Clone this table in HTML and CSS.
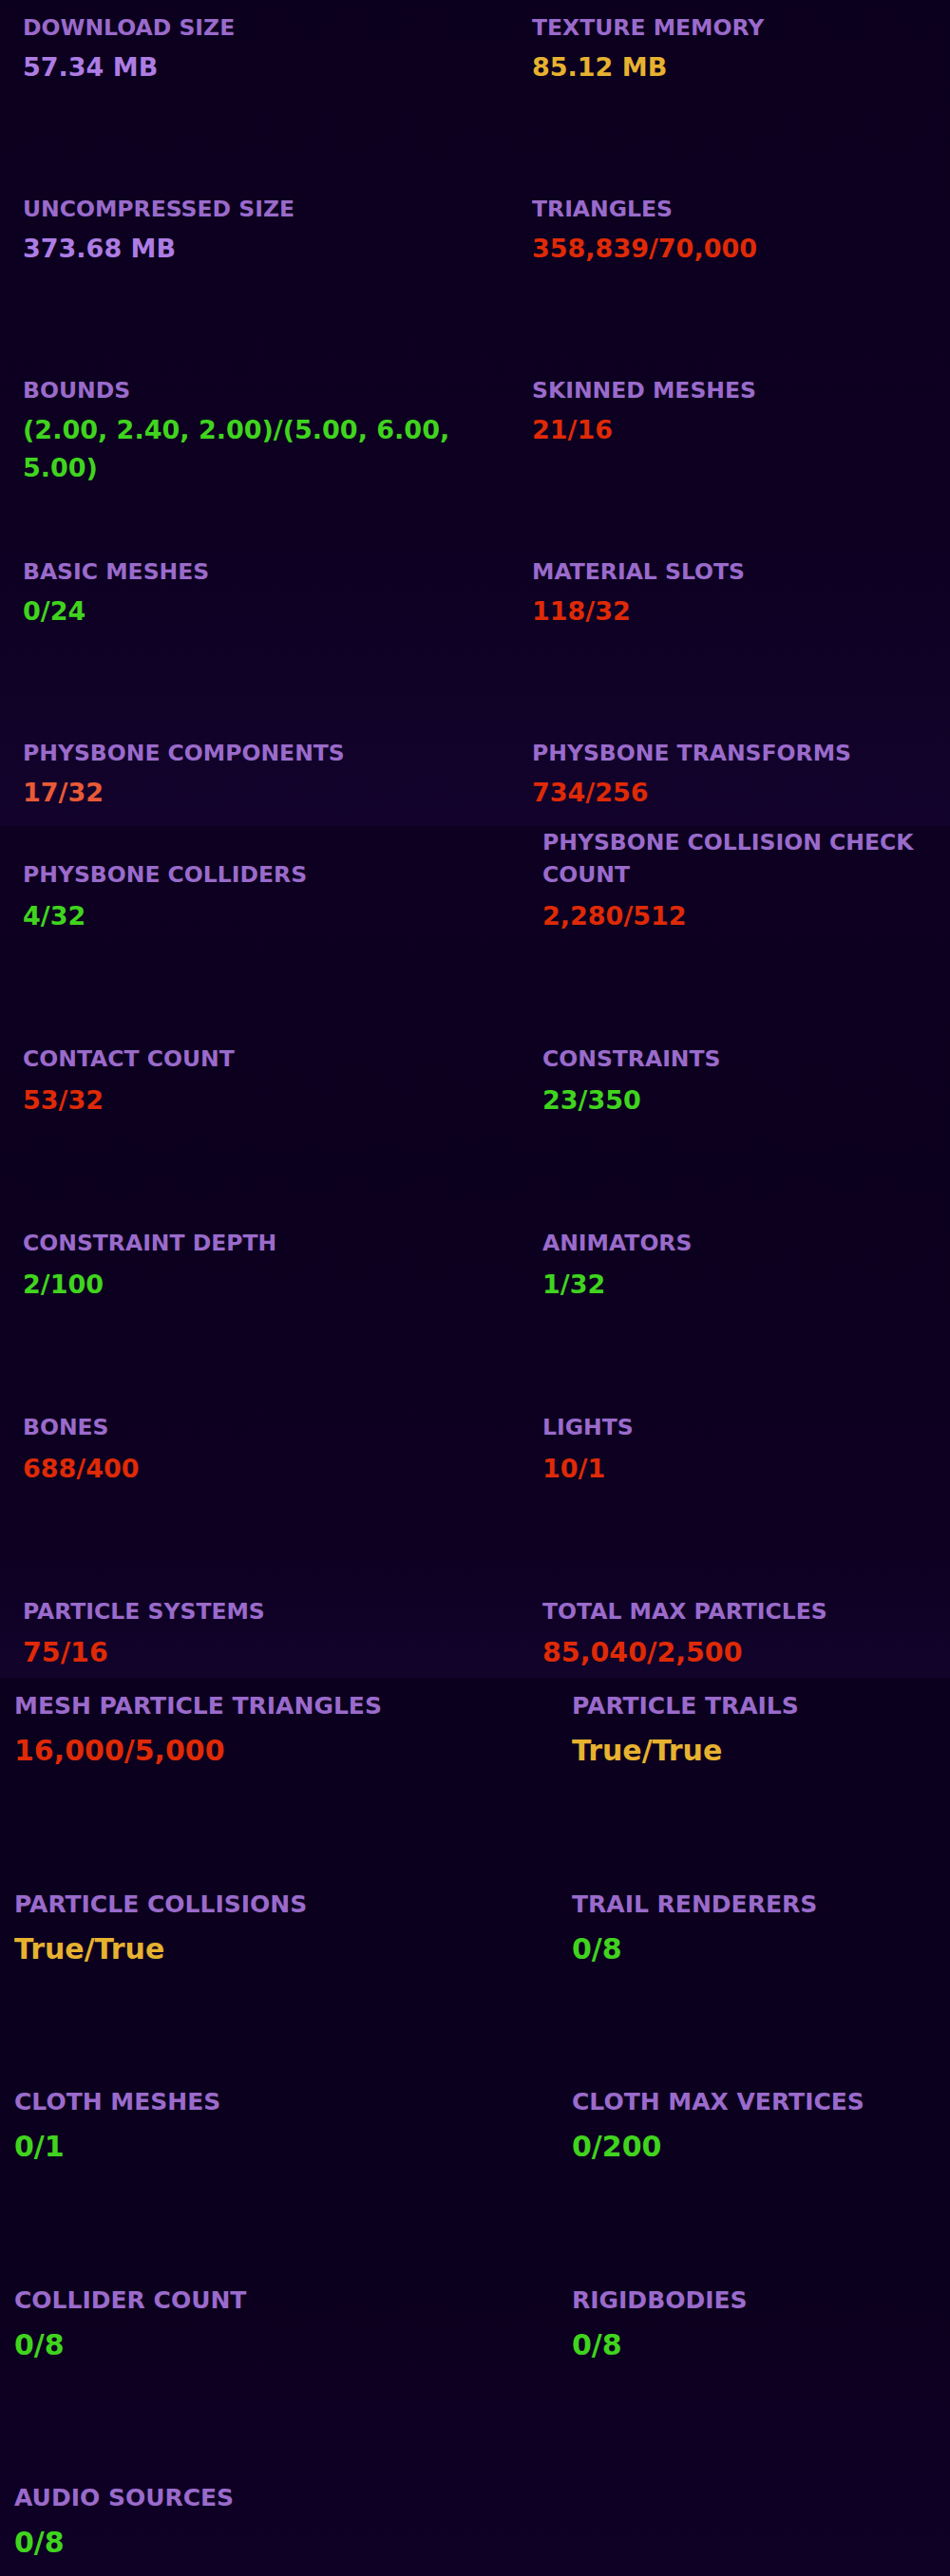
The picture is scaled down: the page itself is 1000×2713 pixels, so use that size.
FILE: index.html
```html
<!DOCTYPE HTML><html>
<head>
  <meta name="viewport" content="width=device-width, initial-scale=1">
  <title>Avatar Performance Stats</title>
  <link rel="stylesheet" href="styles.css">
</head>
<body>
  <main class="stats">

    <section class="panel panel-top">
      <div class="stat">
        <div class="label">DOWNLOAD SIZE</div>
        <div class="value lavender">57.34 MB</div>
      </div>
      <div class="stat">
        <div class="label">TEXTURE MEMORY</div>
        <div class="value yellow">85.12 MB</div>
      </div>
      <div class="stat">
        <div class="label">UNCOMPRESSED SIZE</div>
        <div class="value lavender">373.68 MB</div>
      </div>
      <div class="stat">
        <div class="label">TRIANGLES</div>
        <div class="value red">358,839/70,000</div>
      </div>
      <div class="stat">
        <div class="label">BOUNDS</div>
        <div class="value green">(2.00, 2.40, 2.00)/(5.00, 6.00, 5.00)</div>
      </div>
      <div class="stat">
        <div class="label">SKINNED MESHES</div>
        <div class="value red">21/16</div>
      </div>
      <div class="stat">
        <div class="label">BASIC MESHES</div>
        <div class="value green">0/24</div>
      </div>
      <div class="stat">
        <div class="label">MATERIAL SLOTS</div>
        <div class="value red">118/32</div>
      </div>
      <div class="stat">
        <div class="label">PHYSBONE COMPONENTS</div>
        <div class="value orange">17/32</div>
      </div>
      <div class="stat">
        <div class="label">PHYSBONE TRANSFORMS</div>
        <div class="value red">734/256</div>
      </div>
    </section>

    <section class="panel panel-mid">
      <div class="stat">
        <div class="label">PHYSBONE COLLIDERS</div>
        <div class="value green">4/32</div>
      </div>
      <div class="stat">
        <div class="label">PHYSBONE COLLISION CHECK COUNT</div>
        <div class="value red">2,280/512</div>
      </div>
      <div class="stat">
        <div class="label">CONTACT COUNT</div>
        <div class="value red">53/32</div>
      </div>
      <div class="stat">
        <div class="label">CONSTRAINTS</div>
        <div class="value green">23/350</div>
      </div>
      <div class="stat">
        <div class="label">CONSTRAINT DEPTH</div>
        <div class="value green">2/100</div>
      </div>
      <div class="stat">
        <div class="label">ANIMATORS</div>
        <div class="value green">1/32</div>
      </div>
      <div class="stat">
        <div class="label">BONES</div>
        <div class="value red">688/400</div>
      </div>
      <div class="stat">
        <div class="label">LIGHTS</div>
        <div class="value red">10/1</div>
      </div>
      <div class="stat">
        <div class="label">PARTICLE SYSTEMS</div>
        <div class="value red wide">75/16</div>
      </div>
      <div class="stat">
        <div class="label">TOTAL MAX PARTICLES</div>
        <div class="value red wide">85,040/2,500</div>
      </div>
    </section>

    <section class="panel panel-bottom">
      <div class="stat">
        <div class="label">MESH PARTICLE TRIANGLES</div>
        <div class="value red">16,000/5,000</div>
      </div>
      <div class="stat">
        <div class="label">PARTICLE TRAILS</div>
        <div class="value yellow">True/True</div>
      </div>
      <div class="stat">
        <div class="label">PARTICLE COLLISIONS</div>
        <div class="value yellow">True/True</div>
      </div>
      <div class="stat">
        <div class="label">TRAIL RENDERERS</div>
        <div class="value green">0/8</div>
      </div>
      <div class="stat">
        <div class="label">CLOTH MESHES</div>
        <div class="value green">0/1</div>
      </div>
      <div class="stat">
        <div class="label">CLOTH MAX VERTICES</div>
        <div class="value green">0/200</div>
      </div>
      <div class="stat">
        <div class="label">COLLIDER COUNT</div>
        <div class="value green">0/8</div>
      </div>
      <div class="stat">
        <div class="label">RIGIDBODIES</div>
        <div class="value green">0/8</div>
      </div>
      <div class="stat">
        <div class="label">AUDIO SOURCES</div>
        <div class="value green">0/8</div>
      </div>
    </section>

  </main>
</body>
</html>
```

FILE: styles.css
```css
html { background-color: #0c001f; }
body { margin: 0; font-family: Verdana, "DejaVu Sans", sans-serif; font-weight: bold; }

.stats { display: flex; flex-direction: column; }

.panel { display: grid; box-sizing: border-box; }

/* first screen: two columns, fixed rows */
.panel-top {
  height: 870px;
  padding: 12px 0 0 24px;
  grid-template-columns: 536px 1fr;
  grid-auto-rows: 79px;
  row-gap: 112px;
  background: linear-gradient(180deg, #0c001f 0%, #0d0021 65%, #13032c 100%);
}

/* second screen: rows sit on their value line */
.panel-mid {
  height: 897px;
  padding: 0 0 6px 24px;
  grid-template-columns: 547px 1fr;
  grid-auto-rows: minmax(81px, auto);
  row-gap: 113px;
  align-items: end;
  background: linear-gradient(180deg, #0d0021 0%, #0c001f 40%, #0d0021 85%, #12032b 100%);
}
.panel-mid .value { margin-top: 7px; }

/* third screen: larger text */
.panel-bottom {
  height: 946px;
  padding: 12px 0 0 15px;
  grid-template-columns: 587px 1fr;
  grid-auto-rows: 86px;
  row-gap: 122.5px;
  background: linear-gradient(180deg, #0c001f 0%, #0c001f 70%, #0f0026 100%);
}
.panel-bottom .label { font-size: 25px; line-height: 36px; }
.panel-bottom .value { font-size: 30px; line-height: 42px; margin-top: 8px; }

.label { font-size: 23.5px; line-height: 34px; color: #9a6bcb; }
.value { font-size: 27px; line-height: 40px; margin-top: 5px; }
.value.wide { font-size: 28.5px; }

.lavender { color: #ad7de3; }
.yellow { color: #e7b22f; }
.red { color: #df2a06; }
.orange { color: #e85a36; }
.green { color: #40d41e; }
```
